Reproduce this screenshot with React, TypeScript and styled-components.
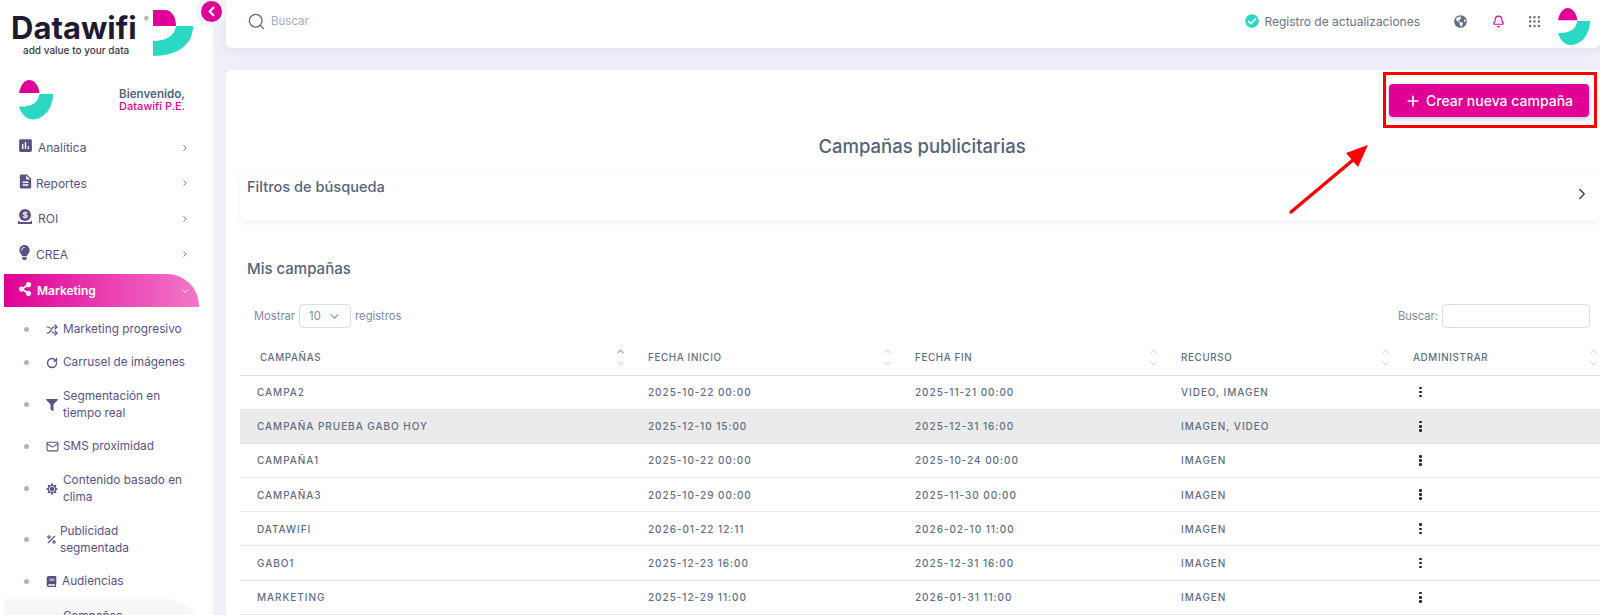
import styled, { createGlobalStyle } from 'styled-components';
import type { ReactNode } from 'react';
import { Bell, ChevronDown, ChevronLeft, ChevronRight, ChevronUp, Mail, Percent, Plus, RotateCw, Search, Shuffle } from 'lucide-react';
import { FaBook, FaCheckCircle, FaFilter, FaGlobeAmericas, FaLightbulb, FaShareAlt, FaSun } from 'react-icons/fa';
import { MdAssessment, MdDescription } from 'react-icons/md';
import { TbGridDots } from 'react-icons/tb';

const FONT = `Inter, "Open Sans", "Liberation Sans", sans-serif`;
const MAGENTA = '#e00096';
const TEAL = '#2bd8c4';
const PURPLE = '#5c5187';
const SLATE = '#53647c';

const GlobalStyle = createGlobalStyle`
	html, body {
		margin: 0;
		padding: 0;
		background: #eeeff9;
		font-family: ${FONT};
	}
	* {
		box-sizing: border-box;
	}
`;

const Page = styled.div`
	position: relative;
	display: flex;
	width: 1600px;
	height: 615px;
	overflow: hidden;
	background: #eeeff9;
`;

const Sidebar = styled.aside`
	flex: 0 0 213px;
	height: 615px;
	overflow: hidden;
	background: #fff;
`;

const Brand = styled.div`
	display: flex;
	height: 80px;
	padding: 10px 0 0 11px;
`;

const BrandWords = styled.div`
	width: 140px;
	padding-top: 2px;
`;

const BrandName = styled.div`
	position: relative;
	font-size: 31px;
	line-height: 32px;
	font-weight: 700;
	color: #1d1a33;
	letter-spacing: 0;

	sup {
		position: absolute;
		left: 133px;
		top: 4px;
		font-size: 7px;
		line-height: 8px;
		font-weight: 400;
		color: #777;
	}
`;

const BrandTag = styled.div`
	padding-left: 12px;
	font-size: 10px;
	line-height: 12px;
	font-weight: 500;
	color: #3a3a4c;
`;

const Welcome = styled.div`
	display: flex;
	justify-content: space-between;
	align-items: center;
	height: 40px;
	padding: 0 28px 0 19px;
`;

const WelcomeText = styled.div`
	text-align: right;
	font-size: 11.6px;
	line-height: 12px;
	font-weight: 600;
	color: ${SLATE};

	span {
		display: block;
		font-size: 11px;
		font-weight: 500;
		color: ${MAGENTA};
	}
`;

const Nav = styled.nav`
	padding-top: 10px;
`;

const NavRow = styled.div`
	display: flex;
	align-items: center;
	height: 35.5px;
	padding: 0 23px 0 17px;
	font-size: 12px;
	color: ${PURPLE};

	svg:first-child {
		margin-top: -4px;
	}
`;

const NavLabel = styled.span<{ $gap: number }>`
	flex: 1;
	margin-left: ${(p) => p.$gap}px;
`;

const ActiveRow = styled.div`
	display: flex;
	align-items: center;
	width: 195px;
	height: 33px;
	margin: 2px 0 0 4px;
	padding: 0 9px 0 14px;
	border-radius: 0 32px 0 0;
	background: linear-gradient(90deg, #e00096 0%, #f277c8 100%);
	font-size: 12px;
	font-weight: 600;
	color: #fff;

	svg:first-child {
		margin-top: -4px;
	}
`;

const SubList = styled.div`
	padding-top: 6px;
`;

const SubRow = styled.div<{ $double?: boolean }>`
	display: flex;
	align-items: center;
	height: ${(p) => (p.$double ? 51 : 33)}px;
	padding-left: 24px;
	font-size: 11.8px;
	line-height: 17px;
	color: ${PURPLE};
`;

const Dot = styled.i`
	flex: 0 0 5px;
	height: 5px;
	margin-right: 17px;
	border-radius: 50%;
	background: #aab4c3;
`;

const SubIcon = styled.span<{ $width: number }>`
	display: flex;
	flex: 0 0 ${(p) => p.$width}px;
	align-items: center;
`;

const CurrentRow = styled.div`
	width: 195px;
	height: 40px;
	margin: 1px 0 0 4px;
	padding: 9px 0 0 59px;
	border-radius: 0 32px 0 0;
	background: #f7f7f7;
	font-size: 11.8px;
	line-height: 17px;
	color: ${PURPLE};
`;

const Content = styled.main`
	flex: 1;
	min-width: 0;
	padding-left: 13px;
`;

const TopBar = styled.header`
	display: flex;
	align-items: center;
	height: 48px;
	padding: 0 10px 6px 21px;
	border-radius: 0 0 6px 6px;
	background: #fff;
	box-shadow: 0 3px 8px rgba(90, 90, 140, 0.08);
`;

const TopSearch = styled.div`
	display: flex;
	flex: 1;
	align-items: center;
	gap: 5px;
	font-size: 11.5px;
	color: #a3adbd;
`;

const UpdatesLink = styled.div`
	display: flex;
	align-items: center;
	gap: 5px;
	margin-right: 30px;
	font-size: 12px;
	color: #66758a;
`;

const TopIcons = styled.div`
	display: flex;
	align-items: center;
`;

const IconSlot = styled.span<{ $width: number }>`
	display: flex;
	justify-content: center;
	width: ${(p) => p.$width}px;
`;

const AvatarSlot = styled.span`
	display: flex;
	justify-content: flex-end;
	width: 48px;
	margin-top: 11px;
`;

const Card = styled.section`
	height: 545px;
	margin-top: 22px;
	padding: 14px 0 0 14px;
	border-radius: 6px 0 0 0;
	background: #fff;
`;

const ButtonRow = styled.div`
	display: flex;
	justify-content: flex-end;
	padding-right: 11px;
`;

const PrimaryButton = styled.button`
	display: flex;
	align-items: center;
	justify-content: center;
	gap: 5px;
	width: 200px;
	height: 33px;
	border: 0;
	border-radius: 4px;
	background: ${MAGENTA};
	box-shadow: 0 2px 5px rgba(110, 70, 200, 0.35);
	font-family: ${FONT};
	font-size: 14px;
	font-weight: 500;
	color: #fff;
`;

const Title = styled.h1`
	margin: 16px 0 0;
	padding-left: 4px;
	text-align: center;
	font-size: 18.5px;
	line-height: 26px;
	font-weight: 500;
	color: ${SLATE};
`;

const FilterCard = styled.div`
	display: flex;
	justify-content: space-between;
	height: 50px;
	margin-top: 11px;
	padding: 8px 9px 0 7px;
	border-radius: 6px;
	background: #fff;
	box-shadow: 0 2px 6px rgba(80, 80, 120, 0.1);
`;

const FilterTitle = styled.div`
	font-size: 14.6px;
	line-height: 18px;
	font-weight: 500;
	color: ${SLATE};
`;

const FilterChevron = styled.span`
	display: flex;
	padding-top: 7px;
	color: #36465c;
`;

const SectionTitle = styled.h2`
	margin: 39px 0 0 7px;
	font-size: 15px;
	line-height: 20px;
	font-weight: 500;
	color: ${SLATE};
`;

const TableControls = styled.div`
	display: flex;
	justify-content: space-between;
	align-items: center;
	height: 24px;
	margin-top: 25px;
	padding: 0 10px 0 14px;
	font-size: 11.2px;
	color: #7f8b9c;
`;

const ControlGroup = styled.label`
	display: flex;
	align-items: center;
	gap: 4px;
`;

const SelectBox = styled.div`
	display: flex;
	align-items: center;
	justify-content: space-between;
	width: 52px;
	height: 24px;
	padding: 0 9px;
	border: 1px solid #d8dde6;
	border-radius: 4px;
	color: #7f8b9c;
`;

const SearchInput = styled.input`
	width: 148px;
	height: 24px;
	border: 1px solid #d8dde6;
	border-radius: 4px;
	background: #fff;
`;

const Table = styled.table`
	width: 1360px;
	margin-top: 13px;
	border-collapse: collapse;
	table-layout: fixed;
`;

const Th = styled.th<{ $width: number; $first?: boolean }>`
	width: ${(p) => p.$width}px;
	height: 34px;
	padding: 0 0 0 ${(p) => (p.$first ? 20 : 10)}px;
	border-bottom: 1px solid #d8dde6;
	text-align: left;
	font-size: 9.8px;
	font-weight: 500;
	letter-spacing: 0.65px;
	color: #5f6e84;
`;

const ThInner = styled.div`
	display: flex;
	justify-content: space-between;
	align-items: center;
`;

const SortIcons = styled.span<{ $active?: boolean; $edge?: boolean }>`
	display: flex;
	flex-direction: column;
	gap: 1px;
	margin-right: ${(p) => (p.$edge ? 1 : 12)}px;
	color: #b9c1cc;

	svg:first-child {
		color: ${(p) => (p.$active ? '#4c5a6e' : '#b9c1cc')};
	}
`;

const Tr = styled.tr<{ $striped?: boolean }>`
	background: ${(p) => (p.$striped ? '#ebebeb' : '#fff')};
`;

const Td = styled.td<{ $first?: boolean }>`
	height: 34.2px;
	padding: 0 0 0 ${(p) => (p.$first ? 17 : 10)}px;
	border-bottom: 1px solid #e4e7ec;
	font-size: 10px;
	font-weight: 500;
	letter-spacing: 0.95px;
	color: #5f6e84;
	white-space: nowrap;
`;

const Dots = styled.span`
	display: flex;
	flex-direction: column;
	gap: 1.5px;
	width: 3px;
	margin-left: 6px;

	i {
		width: 2.6px;
		height: 2.6px;
		border-radius: 50%;
		background: #222;
	}
`;

const HighlightBox = styled.div`
	position: absolute;
	left: 1383px;
	top: 72px;
	width: 214px;
	height: 56px;
	border: 3px solid #f00;
	pointer-events: none;
`;

const ArrowMark = styled.svg`
	position: absolute;
	left: 1285px;
	top: 140px;
`;

const CollapseToggle = styled.button`
	position: absolute;
	left: 196px;
	top: -4px;
	display: flex;
	align-items: center;
	justify-content: center;
	width: 31px;
	height: 31px;
	padding: 0;
	border: 5px solid #f4f4fb;
	border-radius: 50%;
	background: ${MAGENTA};
	color: #fff;
`;

const LogoMark = () => (
	<svg width="40" height="47" viewBox="0 0 40 47" style={{ marginLeft: 2 }}>
		<path d="M0 0H12C18 0 23 6 23 16H0Z" fill={MAGENTA} />
		<path d="M23 16H40C40 35 24 46 0 46V31C12 31 22 26 23 16Z" fill={TEAL} />
	</svg>
);

const Avatar = ({ size }: { size: number }) => (
	<svg width={size} height={(size * 116) / 100} viewBox="0 0 100 116">
		<path d="M0 38C4 16 16 0 30 0C45 0 58 16 60 38Z" fill={MAGENTA} />
		<path d="M60 41H100C100 84 72 116 40 116C22 116 6 100 0 78C28 80 56 72 60 41Z" fill={TEAL} />
	</svg>
);

const RoiIcon = () => (
	<svg width="16" height="16" viewBox="0 0 16 16">
		<circle cx="8" cy="6" r="6" fill={PURPLE} />
		<text x="8" y="9" textAnchor="middle" fontSize="8" fontWeight="700" fill="#fff" fontFamily={FONT}>$</text>
		<path d="M1 11.5V15H15V11.5L13 13H3Z" fill={PURPLE} />
	</svg>
);

const Sort = ({ active, edge }: { active?: boolean; edge?: boolean }) => (
	<SortIcons $active={active} $edge={edge}>
		<ChevronUp size={11} />
		<ChevronDown size={11} />
	</SortIcons>
);

const mainNav: { label: string; icon: ReactNode; gap: number }[] = [
	{ label: 'Analítica', icon: <MdAssessment size={17} />, gap: 4 },
	{ label: 'Reportes', icon: <MdDescription size={17} />, gap: 2 },
	{ label: 'ROI', icon: <RoiIcon />, gap: 5 },
	{ label: 'CREA', icon: <FaLightbulb size={15} />, gap: 4 },
];

const subNav: { label: ReactNode; icon: ReactNode; width: number; double?: boolean }[] = [
	{ label: 'Marketing progresivo', icon: <Shuffle size={12} strokeWidth={2.4} />, width: 17 },
	{ label: 'Carrusel de imágenes', icon: <RotateCw size={12} strokeWidth={2.6} />, width: 17 },
	{ label: <>Segmentación en<br />tiempo real</>, icon: <FaFilter size={12} />, width: 17, double: true },
	{ label: 'SMS proximidad', icon: <Mail size={13} />, width: 17 },
	{ label: <>Contenido basado en<br />clima</>, icon: <FaSun size={12} />, width: 17, double: true },
	{ label: <>Publicidad<br />segmentada</>, icon: <Percent size={11} strokeWidth={2.6} />, width: 14, double: true },
	{ label: 'Audiencias', icon: <FaBook size={11} />, width: 16 },
];

const columns = [
	{ label: 'CAMPAÑAS', width: 398 },
	{ label: 'FECHA INICIO', width: 267 },
	{ label: 'FECHA FIN', width: 266 },
	{ label: 'RECURSO', width: 232 },
	{ label: 'ADMINISTRAR', width: 197 },
];

const campaigns = [
	['CAMPA2', '2025-10-22 00:00', '2025-11-21 00:00', 'VIDEO, IMAGEN'],
	['CAMPAÑA PRUEBA GABO HOY', '2025-12-10 15:00', '2025-12-31 16:00', 'IMAGEN, VIDEO'],
	['CAMPAÑA1', '2025-10-22 00:00', '2025-10-24 00:00', 'IMAGEN'],
	['CAMPAÑA3', '2025-10-29 00:00', '2025-11-30 00:00', 'IMAGEN'],
	['DATAWIFI', '2026-01-22 12:11', '2026-02-10 11:00', 'IMAGEN'],
	['GABO1', '2025-12-23 16:00', '2025-12-31 16:00', 'IMAGEN'],
	['MARKETING', '2025-12-29 11:00', '2026-01-31 11:00', 'IMAGEN'],
];

export default function App() {
	return (
		<Page>
			<GlobalStyle />
			<Sidebar>
				<Brand>
					<BrandWords>
						<BrandName>
							Datawifi<sup>®</sup>
						</BrandName>
						<BrandTag>add value to your data</BrandTag>
					</BrandWords>
					<LogoMark />
				</Brand>
				<Welcome>
					<Avatar size={34} />
					<WelcomeText>
						Bienvenido,
						<span>Datawifi P.E.</span>
					</WelcomeText>
				</Welcome>
				<Nav>
					{mainNav.map((item) => (
						<NavRow key={item.label}>
							{item.icon}
							<NavLabel $gap={item.gap}>{item.label}</NavLabel>
							<ChevronRight size={10} />
						</NavRow>
					))}
					<ActiveRow>
						<FaShareAlt size={14} />
						<NavLabel $gap={5}>Marketing</NavLabel>
						<ChevronDown size={10} />
					</ActiveRow>
					<SubList>
						{subNav.map((item, i) => (
							<SubRow key={i} $double={item.double}>
								<Dot />
								<SubIcon $width={item.width}>{item.icon}</SubIcon>
								<span>{item.label}</span>
							</SubRow>
						))}
					</SubList>
					<CurrentRow>Campañas</CurrentRow>
				</Nav>
			</Sidebar>
			<Content>
				<TopBar>
					<TopSearch>
						<Search size={19} color="#53677f" strokeWidth={1.6} />
						Buscar
					</TopSearch>
					<UpdatesLink>
						<FaCheckCircle size={14} color={TEAL} />
						Registro de actualizaciones
					</UpdatesLink>
					<TopIcons>
						<IconSlot $width={20}>
							<FaGlobeAmericas size={13} color="#5f6e84" />
						</IconSlot>
						<IconSlot $width={56}>
							<Bell size={13} color={MAGENTA} />
						</IconSlot>
						<IconSlot $width={16}>
							<TbGridDots size={15} color="#5f6e84" />
						</IconSlot>
						<AvatarSlot>
							<Avatar size={32} />
						</AvatarSlot>
					</TopIcons>
				</TopBar>
				<Card>
					<ButtonRow>
						<PrimaryButton>
							<Plus size={16} strokeWidth={2.6} />
							Crear nueva campaña
						</PrimaryButton>
					</ButtonRow>
					<Title>Campañas publicitarias</Title>
					<FilterCard>
						<FilterTitle>Filtros de búsqueda</FilterTitle>
						<FilterChevron>
							<ChevronRight size={18} />
						</FilterChevron>
					</FilterCard>
					<SectionTitle>Mis campañas</SectionTitle>
					<TableControls>
						<ControlGroup>
							Mostrar
							<SelectBox>
								10
								<ChevronDown size={13} />
							</SelectBox>
							registros
						</ControlGroup>
						<ControlGroup>
							Buscar:
							<SearchInput />
						</ControlGroup>
					</TableControls>
					<Table>
						<thead>
							<tr>
								{columns.map((col, i) => (
									<Th key={col.label} $width={col.width} $first={i === 0}>
										<ThInner>
											{col.label}
											<Sort active={i === 0} edge={i === columns.length - 1} />
										</ThInner>
									</Th>
								))}
							</tr>
						</thead>
						<tbody>
							{campaigns.map((row, i) => (
								<Tr key={row[0]} $striped={i === 1}>
									{row.map((cell, j) => (
										<Td key={j} $first={j === 0}>
											{cell}
										</Td>
									))}
									<Td>
										<Dots>
											<i />
											<i />
											<i />
										</Dots>
									</Td>
								</Tr>
							))}
						</tbody>
					</Table>
				</Card>
			</Content>
			<CollapseToggle>
				<ChevronLeft size={15} strokeWidth={3.5} />
			</CollapseToggle>
			<HighlightBox />
			<ArrowMark width="90" height="80" viewBox="0 0 90 80">
				<path d="M6 72L68 20" stroke="#f00" strokeWidth="3.4" strokeLinecap="round" />
				<path d="M83 5L73 27L61 13Z" fill="#f00" />
			</ArrowMark>
		</Page>
	);
}
